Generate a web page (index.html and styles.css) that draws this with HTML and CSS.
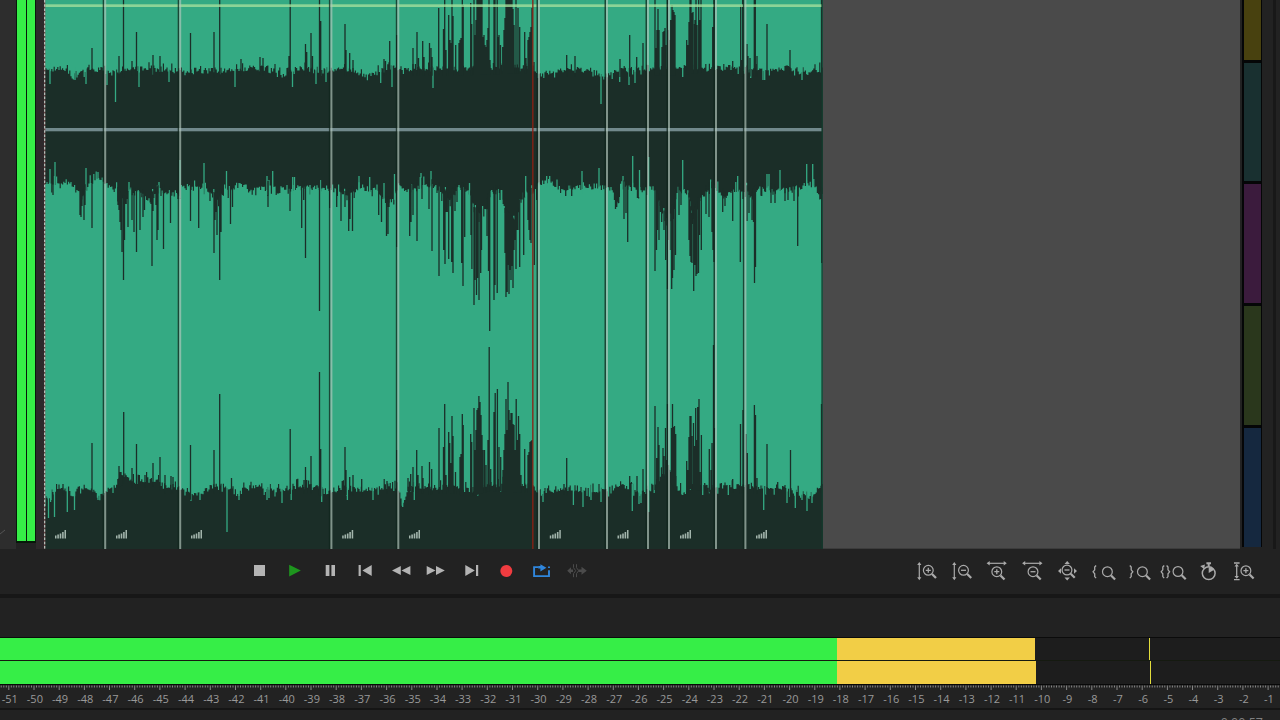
FILE: index.html
```
<!DOCTYPE html>
<html lang="en">
<head>
  <meta charset="UTF-8">
  <meta name="viewport" content="width=device-width, initial-scale=1.0">
  <title>Audio Editor</title>
  <link rel="stylesheet" href="styles.css">
</head>
<body>

<svg class="defs" width="0" height="0">
  <defs>
    <g id="lens">
      <circle cx="0" cy="0" r="4.9" fill="none" stroke-width="1.2"/>
      <path d="M3.7 3.7L7.7 7.8" stroke-width="2.2"/>
    </g>
    <path id="brace" d="M1.4 -6.3L0 -4.8V-2L-1.6 0L0 2V4.8L1.4 6.3" fill="none" stroke-width="1.3"/>
  </defs>
</svg>

<div class="app">
  <div class="editor">
    <div class="gutter">
      <svg width="6" height="10" viewBox="0 0 6 10"><path d="M0 7L5 3" stroke="#555" fill="none"/></svg>
    </div>
    <div class="vu"><i></i><i></i></div>
    <svg class="wave" id="wave" width="779" height="549" viewBox="44 0 779 549"></svg>
    <div class="empty"></div>
    <div class="swatches">
      <i class="yellow"></i>
      <i class="teal"></i>
      <i class="purple"></i>
      <i class="green"></i>
      <i class="blue"></i>
    </div>
    <div class="edge"></div>
  </div>

  <div class="transport">
    <div class="buttons play-buttons">
      <svg viewBox="-12 -12 24 24"><path d="M-6 -6H5V5H-6z"/></svg>
      <svg viewBox="-12 -12 24 24"><path d="M-5.8 -6.3L5.8 -.4L-5.8 5.6z" fill="#1e961e"/></svg>
      <svg viewBox="-12 -12 24 24"><path d="M-4.3 -6h3.7V5h-3.7zM1.4 -6H5V5H1.4z"/></svg>
      <svg viewBox="-12 -12 24 24"><path d="M-6.4 -6h2.2V5h-2.2zM6.7 -6V5L-2.6 -.5z"/></svg>
      <svg viewBox="-12 -12 24 24"><path d="M-.2 -5v9L-9 -.5zM9.4 -5v9L.5 -.5z"/></svg>
      <svg viewBox="-12 -12 24 24"><path d="M-9.3 -5v9L-.5 -.5zM0 -5v9L8.8 -.5z"/></svg>
      <svg viewBox="-12 -12 24 24"><path d="M5 -6h2.2V5H5zM-5.7 -6V5L3.8 -.5z"/></svg>
      <svg viewBox="-12 -12 24 24"><circle cx=".3" cy=".1" r="6" fill="#f03c40"/></svg>
      <svg viewBox="-12 -12 24 24"><path d="M-3.6 -3.9H-7.9V5.1H7V-.7M7 -2.9V-4.4" fill="none" stroke="#2f86dc" stroke-width="1.9"/><path d="M-3.8 -4.9H-1.6V-6.8L4.4 -3.3L-1.6 .5V-2.6H-3.8z" fill="#2f86dc"/></svg>
      <svg viewBox="-12 -12 24 24"><path d="M-9.8 -.3L-6 -3.8V-1.6H-4V1H-6V3.2zM9.8 -.3L4.5 -4.3V-1.6H1.5V1H4.5V3.7z" fill="#4b4b4b"/><path d="M-3.5 -6.8V-3.3L-1.3 -.3L-3.5 2.7V6.2M-.5 -6.8V-3.3L1.7 -.3L-.5 2.7V6.2" fill="none" stroke="#4b4b4b"/></svg>
    </div>
    <div class="buttons zoom-buttons">
      <svg viewBox="-12 -12 24 24"><path d="M-7.7 -7V7.5" stroke-width="1.2"/><path class="f" d="M-9.8 -6L-7.7 -9L-5.6 -6zM-9.8 6.3L-7.7 9.2L-5.6 6.3z"/><use href="#lens" x="1.3" y="-.7"/><path d="M-1.2 -.7h5M1.3 -3.2v5" stroke-width="1.3"/></svg>
      <svg viewBox="-12 -12 24 24"><path d="M-7.7 -7V7.5" stroke-width="1.2"/><path class="f" d="M-9.8 -6L-7.7 -9L-5.6 -6zM-9.8 6.3L-7.7 9.2L-5.6 6.3z"/><use href="#lens" x="1.5" y="-.7"/><path d="M-1 -.7h5" stroke-width="1.3"/></svg>
      <svg viewBox="-12 -12 24 24"><path d="M-8 -7.7H8" stroke-width="1.2"/><path class="f" d="M-7.3 -10L-10.4 -7.7L-7.3 -5.4zM6.7 -10L9.8 -7.7L6.7 -5.4z"/><use href="#lens" x="-.2" y=".7"/><path d="M-2.7 .7h5M-.2 -1.8v5" stroke-width="1.3"/></svg>
      <svg viewBox="-12 -12 24 24"><path d="M-9 -7.7H8" stroke-width="1.2"/><path class="f" d="M-7.8 -10L-10.9 -7.7L-7.8 -5.4zM6.4 -10L9.5 -7.7L6.4 -5.4z"/><use href="#lens" x="0" y=".7"/><path d="M-2.5 .7h5" stroke-width="1.3"/></svg>
      <svg viewBox="-12 -12 24 24"><path class="f" d="M-.8 -10L-3.5 -7H1.9zM-10 0L-7 -2.7V2.7zM9 0L6 -2.7V2.7zM-.8 9.5L-3.5 6.5H1.9z"/><use href="#lens" x="-1" y="-1"/><path d="M-3.5 -1h5" stroke-width="1.3"/></svg>
      <svg viewBox="-12 -12 24 24"><use href="#brace" x="-8.3" y=".8"/><use href="#lens" x="4.4" y=".7"/></svg>
      <svg viewBox="-12 -12 24 24"><use href="#brace" transform="translate(-6.8 .8) scale(-1 1)"/><use href="#lens" x="4.4" y=".7"/></svg>
      <svg viewBox="-12 -12 24 24"><use href="#brace" x="-10.2" y=".8"/><use href="#brace" transform="translate(-5 .8) scale(-1 1)"/><use href="#lens" x="5" y=".5"/></svg>
      <svg viewBox="-12 -12 24 24"><circle cx="-.3" cy="2.2" r="6.4" fill="none" stroke-width="1.5"/><path class="f" d="M-2.6 -8.7H2v2h-4.6zM-1.3 -7H.7v2.5h-2zM-.3 2V-4Q4.2 -3.5 4.7 -1zM-8.8 -5L-4.1 -6.5L-4.8 -1.7z"/></svg>
      <svg viewBox="-12 -12 24 24"><path d="M-7.3 -6V6.5M-10 -8h5.6M-10 8.6h5.6" stroke-width="1.3"/><path class="f" d="M-9.5 -4.5L-7.3 -7.3L-5.1 -4.5zM-9.5 5L-7.3 7.8L-5.1 5z"/><use href="#lens" x="1.9" y="-.3"/><path d="M-.6 -.3h5M1.9 -2.8v5" stroke-width="1.3"/></svg>
    </div>
  </div>

  <div class="levels">
    <div class="meter"><i class="low"></i><i class="mid left"></i><i class="peak"></i></div>
    <div class="meter"><i class="low"></i><i class="mid right"></i><i class="peak"></i></div>
    <svg class="ruler" id="ruler" width="1280" height="23" viewBox="0 685 1280 23"></svg>
  </div>

  <div class="status"><span>0:00:57</span></div>
</div>

<script src="wave.js"></script>
</body>
</html>
```

FILE: styles.css
```
* { box-sizing: border-box; }
body { margin: 0; background: #222; overflow: hidden; font-family: "Open Sans", "Noto Sans", sans-serif; }
i { display: block; }
svg { display: block; }
.defs { position: absolute; }
.app { width: 1280px; height: 720px; overflow: hidden; background: #222; }

/* Tracks */
.editor { display: flex; height: 549px; }
.gutter { width: 16px; background: #2d2d2d; padding-top: 527px; }
.vu { display: flex; gap: 1px; width: 20px; height: 543px; padding: 0 1px 2px; background: #07180a; flex: none; }
.vu i { flex: 1; background: #36ee47; }
.wave { flex: none; margin-left: 8px; background: #34aa83; box-shadow: -8px 0 #2d292b; }
.empty { width: 417px; height: 549px; background: #4a4a4a; border-bottom: 1px solid #3c3c3c; }

.swatches { display: flex; flex-direction: column; gap: 3px; width: 20px; height: 547px; margin-left: 2px; padding: 0 1px 0 2px; background: #050607; flex: none; }
.swatches i { height: 119px; flex: none; }
.swatches .yellow { height: 60px; background: #48410f; }
.swatches .teal { background: #193030; height: 118px; }
.swatches .purple { background: #3b1b3d; }
.swatches .green { background: #2a371c; }
.swatches .blue { background: #15283f; }
.edge { flex: 1; margin-left: 11px; border-left: 3px solid #181818; }

/* Transport and zoom */
.transport { height: 49px; padding-top: 10px; display: flex; background: #222; border-bottom: 4px solid #171717; }
.buttons { display: grid; grid-template-columns: repeat(10, 1fr); justify-items: center; height: 24px; }
.buttons svg { width: 24px; height: 24px; overflow: visible; }
.play-buttons { width: 352.5px; margin-left: 242px; fill: #b4b4b4; }
.zoom-buttons { width: 352px; margin-left: 315px; stroke: #aaa; }
.zoom-buttons .f { fill: #aaa; stroke: none; }

/* Level meters */
.levels { margin-top: 39px; border-top: 1px solid #0b0b0b; border-bottom: 2px solid #151515; height: 73px; }
.meter { display: flex; height: 22px; background: #1d1d1d; }
.meter + .meter { border-top: 1px solid #151a10; height: 25px; border-bottom: 1px solid #080808; }
.low { width: 837px; background: #36ee47; }
.mid { background: #f2ce46; }
.mid.left { width: 198px; }
.mid.right { width: 199px; }
.peak { width: 1px; margin-left: 114px; background: #e2dc3c; }
.ruler text { font-size: 11px; font-weight: 500; fill: #999; text-anchor: middle; }

.status { height: 9px; padding: 5px 17px 0 0; text-align: right; font-size: 12.5px; line-height: 16px; color: #808080; }
```

FILE: wave.js
```
// Peaks are x,y pairs; dips are short runs back toward the other colour.
const top_ = {
  base: [[44,71],[60,68],[68,72],[72,76],[80,71],[100,68],[110,74],[125,70],[140,68],[200,71],[260,68],[275,70],[282,75],[300,68],[320,71],[335,69],[355,70],[367,77],[385,68],[450,69],[530,66],[540,74],[560,70],[590,70],[603,77],[620,70],[680,68],[700,66],[730,69],[765,70],[790,68],[806,73],[822,68]],
  peaks: '92,48 119,56 123.5,0 132,61 136.5,32 153,55 160,56 190.5,33 214,32 219.7,0 241,59 260,57 263,58 289,56 290.2,0 305.5,44 306.7,52 311,33 312.5,56 319.5,0 320.7,21 345,24 346,50 349.7,53 353,60 384,59 385.5,61 389.7,41 396.7,35 413,48 417,32 418.5,58 422.7,41 424,57 429.5,43 431,48 432,57 438.7,8 443.5,29 444.7,0 446,50 448.7,15 450,40 451,43 452,0 453,16 455.7,45 459,43 460,40 461,38 462.3,0 463.2,5 470.7,3 471.7,24 474,0 475,35 476,20 477,0 478,0 479,0 480,0 481,0 482,0 483,37 484,35 485,45 486,47 487,40 488,28 489,0 490,60 494,0 495,0 497.2,0 498,37 499,35 500.5,45 502.7,47 504,30 505,18 506,0 507,0 508,0 509,0 510,0 511,0 512,0 513,9 514,25 516,0 518,8 519.7,27 524.7,32 526,58 528,40 529,37 530,32 531,27 532,8 534,62 566.7,55 575,56 620,59 629.7,35 636.7,57 643,43 655,0 656,48 657,30 658,9 659,30 662,47 663,32 664,31 665,28 666,45 667.5,0 668.5,30 669.5,40 670.7,20 672,5 673,10 674,12 675,15 686.7,40 687.7,45 689,22 690,0 691,0 692,13 693,12 694.5,24 695,20 696,0 697,25 698.7,0 699.7,20 701,0 712.7,27 714,0 732.7,61 740.7,5 741.5,60 742.7,0 747,44 748,56 750,58 754.3,0 755.3,0 757,56 767,24 790,50 821.5,0',
  dips: '50,84 75,80 86,84 107,85 115.5,102 139,87 169,82 235,87 292.5,87 316,84 326,82 380.7,83 392,87 433,88 601,104 619.7,82 629,85 635,83 682.7,77 750.7,78 763,80 764.7,80 802,80'
};
const mid_ = {
  base: [[44,184],[55,182],[70,184],[77,188],[80,198],[84,194],[87,186],[100,178],[107,186],[117,192],[121,200],[125,204],[130,194],[140,194],[150,201],[160,190],[170,193],[178,197],[182,186],[205,190],[215,200],[228,189],[240,184],[248,190],[278,187],[300,188],[320,187],[335,190],[345,198],[355,192],[360,187],[375,190],[388,205],[398,186],[410,192],[425,183],[440,190],[448,200],[458,188],[470,192],[474,214],[484,216],[491,192],[500,192],[505,215],[515,227],[524,188],[531,195],[538,185],[546,180],[560,189],[580,187],[600,186],[612,190],[617,200],[622,187],[640,190],[653,188],[658,202],[665,220],[674,210],[677,190],[688,193],[692,220],[702,196],[710,188],[718,191],[725,198],[731,192],[745,190],[752,198],[758,188],[775,191],[790,190],[810,184],[822,195]],
  peaks: '53,195 80,215 81,217 82,206 84,220 85,205 92,228 118,205 119,210 120,222 121,230 122,252 123.5,280 124.5,240 125.5,204 128,227 132,220 134,232 136.5,252 140,230 143,217 144.5,210 151,204 152,266 153,211 156,205 157,240 158,230 163.5,249 170.5,223 178,199 190.5,221 198.7,228 210,201 214,253 215,220 216,212 217,235 219.7,280 221,232 230.5,224 232.5,207 268,207 290,211 301.7,228 303.7,200 305.5,258 319.5,311 329.7,208 336.7,207 341,221 345,207 348.7,231 350,219 352.5,231 378.7,215 381.5,222 386.5,236 388,234 389,207 396.7,247 409.7,236 411,222 413,215 417,241 422,199 429,209 432,251 439,276 443.7,250 445,264 446,212 447.3,212 448.7,259 450,200 451.7,262 453,273 455,211 457,202 461.7,263 463,286 464.7,237 471,235 471.9,269 474,305 475,280 476.5,295 477.5,278 479,300 480.7,273 481.5,250 487,236 488.5,271 489.7,331 494,300 495,285 497.2,293 500,200 505,253 506,297 507.2,292 508,265 509,294 510,270 511,280 512,266 513,288 514,250 515,240 516,269 517,230 518,230 519.7,267 523.7,255 528,220 529,230 530,240 531,243 534.3,265 536.7,200 565.7,196 571.7,196 614.5,200 615.5,209 616.7,207 618.7,203 624,219 626,213 627.7,242 643,190 655,271 656.5,250 657.5,230 659,240 660.5,212 661.7,222 664,230 665.7,260 667.5,289 668.5,240 670,250 671.7,289 672.5,278 674,270 675.5,255 679,215 681,205 689,240 690,256 691,262 692,263 693.7,291 694.8,265 696,276 697,274 698.5,273 699.5,235 701.3,250 706,214 709,217 712,232 713,250 714,262 722.7,212 725,206 732.7,221 740.3,262 747,221 749,213 752,220 753.5,222 754.5,283 755.5,267 761.7,196 771,203 775,203 785,201 788,200 794,201 797.7,246 820.7,199 821.7,263',
  dips: '50,169 55,162 86,168 98,172 129,182 159,182 180,160 204,163 226.5,171 267,176 272.7,171 292.7,177 294.5,177 310,185 320.5,180 359,176 369.7,177 384,183 394.5,174 421,173 431,171 459,185 469.5,183 491.7,190 501.7,190 525.7,176 546.7,176 549.7,176 582,171 599,168 623,176 632.7,156 639.5,170 648.7,157 682.7,160 737.7,176 767,174 769,174 780,170 806.7,164 812.7,164'
};
const low_ = {
  base: [[44,498],[52,494],[56,487],[68,489],[72,498],[78,486],[92,488],[99,498],[108,490],[117,482],[125,476],[132,482],[155,479],[163,486],[175,487],[183,489],[197,496],[210,487],[225,486],[232,488],[238,496],[242,487],[260,488],[278,490],[295,486],[315,487],[330,493],[345,488],[370,490],[388,486],[398,490],[403,502],[408,484],[430,488],[450,486],[470,490],[490,484],[530,486],[537,492],[555,489],[565,488],[575,489],[600,490],[620,486],[640,494],[652,488],[658,478],[668,468],[676,486],[683,494],[690,482],[712,486],[735,486],[750,487],[765,487],[785,487],[806,498],[812,494],[822,485]],
  peaks: '63,484 92,443 119,466 120,472 121,472 122,475 123.7,412 132,468 136.5,444 145,475 153,463 160,457 165,475 171,476 173,477 190.5,445 214,450 219.7,394 231.5,478 290.2,429 304,480 305.5,467 306.7,480 311,456 319.5,372 320.7,449 345,447 346,470 349.7,477 353,475 361.7,479 387,481 396.7,450 408,478 410.7,474 413,467 416.7,450 418,475 422,466 423,478 429.5,462 431.7,469 439,428 443.5,447 444.7,404 446,475 448.7,432 449.7,443 451,463 452,416 453,436 455.5,472 460,457 461,454 462.3,414 463.2,425 470.7,434 471.7,442 474,408 475,450 476,430 477,410 478,408 478.9,396 480,402 481,415 482,435 483,450 484.5,450 486,465 488,440 489.2,347 490.7,469 494,412 495.2,393 497.4,389 499,447 500.7,457 503,470 504,450 505,434 506,399 507,430 508,382 509,410 510,420 511,413 512,413 513,424 514,425 515,450 516.2,399 517.3,440 518.5,416 519.7,434 521,475 524.7,449 528,455 529,452 530,442 531,441 532,440 564,484 566.7,458 629.7,476 637,476 643,469 655,406 656.7,458 658,427 659,445 662,475 663,448 664,456 665.5,428 666.5,460 667.5,404 668.5,465 669.5,470 671.5,428 672.5,404 673.5,427 674.5,426 675.7,434 686.7,461 687.7,470 689,437 690,416 691,416 692,436 693.5,423 694.7,446 695.7,408 696.7,440 697.7,407 699,399 700,472 701.4,435 704.7,483 709.3,449 711,470 712,443 713.5,345 714.5,428 732.7,479 740.5,424 743,410 746,434 747.3,453 754.4,405 755.5,415 757,478 767,444 777.7,482 790.5,450 821.5,404',
  dips: '45,506 48.5,518 51,500 54.5,517 67.3,512 74.5,510 98,500 200,500 227,532 239,500 267,500 269,498 282,503 291.2,500 321.7,502 347.4,500 373,500 402.7,507 404.7,500 414.3,500 543,502 573.4,505 583,507 591,500 601,502 632.3,511 639,504 641,503 648.7,512 682.7,495 702.7,495 728.3,495 763.7,510 787,503 795.3,508 802,500 807,511 812,503'
};

let seed = 11;
function rnd() {
  seed = (seed * 16807) % 2147483647;
  return seed / 2147483647;
}

function baseAt(base, x) {
  for (let i = 1; i < base.length; i++) {
    if (x <= base[i][0]) {
      const [x0, y0] = base[i - 1], [x1, y1] = base[i];
      return y0 + (y1 - y0) * (x - x0) / (x1 - x0);
    }
  }
  return base[base.length - 1][1];
}

// One jagged edge, sampled every 1.2px
function edge(base, amp) {
  const pts = [];
  for (let x = 44; x < 822.5; x += 1.2) {
    const r = rnd();
    const j = (rnd() - 0.5) * (r > 0.75 ? amp : 6);
    const y = (baseAt(base, x) + j).toFixed(1);
    pts.push(`${x.toFixed(1)},${y}`, `${(x + 1.2).toFixed(1)},${y}`);
  }
  return pts;
}

// Bars start a little past the edge so the jitter leaves no gap under them
function bars(list, base) {
  return list.split(' ').map(p => {
    const [x, y] = p.split(',').map(Number);
    const b = baseAt(base, x);
    const end = b + (y < b ? 7 : -7);
    return `M${(x - 0.65).toFixed(2)} ${y}h1.3V${end.toFixed(1)}h-1.3z`;
  }).join('');
}

const dark = '#1b2e28', green = '#34aa83';
let out = '';
out += `<polygon fill="${dark}" points="${edge(top_.base, 13).join(' ')} ${edge(mid_.base, 20).reverse().join(' ')}"/>`;
out += `<polygon fill="${dark}" points="44,549 ${edge(low_.base, 17).join(' ')} 823,549"/>`;
for (const e of [top_, mid_, low_]) {
  out += `<path fill="${green}" d="${bars(e.dips, e.base)}"/>`;
  out += `<path fill="${dark}" d="${bars(e.peaks, e.base)}"/>`;
}

// volume and pan envelopes
out += '<rect x="44" y="4.3" width="778" height="2.7" fill="#a3df9c" opacity=".8"/>';
out += '<rect x="44" y="128" width="778" height="3.3" fill="#71898c"/>';

// clip boundaries
for (const x of [104.2, 179.2, 330.4, 397.3, 538, 606, 647, 668, 715, 744.4]) {
  out += `<rect x="${x - 1.5}" y="0" width="1.5" height="549" fill="#10251c" opacity=".75"/>`;
  out += `<rect x="${x}" y="0" width="2" height="549" fill="#b5c8be" opacity=".66"/>`;
}
out += '<rect x="821.3" y="0" width="1.7" height="549" fill="#14382c" opacity=".8"/>';
out += '<path d="M44.5 0V549" stroke="#6b4446" stroke-width="1.5"/><path d="M44.5 0V549" stroke="#b4bdb7" stroke-width="1.5" stroke-dasharray="2.5 1.7"/>';
out += '<rect x="532.2" y="0" width="1.3" height="549" fill="#8c2014"/>';

for (const x of [55, 116, 191, 342.2, 409, 549.8, 617.5, 680, 756]) {
  out += `<path fill="#a3b5ac" d="M${x} 535.5h1.5v3h-1.5zm2.3 -1h1.6v4h-1.6zm2.4 -1h1.6v5h-1.6zm2.4 -1.5h1.6v6.5h-1.6zm2.4 -2h1.5v8.5h-1.5z"/>`;
}
document.getElementById('wave').innerHTML = out;

// dB ruler
const step = 25.186;
let marks = '';
for (let i = -4; i <= 506; i++) {
  const x = 8.8 + i * step / 10;
  const h = i % 10 === 0 ? 4.5 : 2;
  marks += `<rect x="${(x - 0.5).toFixed(1)}" y="685.5" width="1" height="${h}" fill="#858585"/>`;
}
for (let db = -51; db <= -1; db++) {
  marks += `<text x="${(9.7 + (db + 51) * step).toFixed(1)}" y="702.5">${db}</text>`;
}
document.getElementById('ruler').innerHTML = marks;
```
